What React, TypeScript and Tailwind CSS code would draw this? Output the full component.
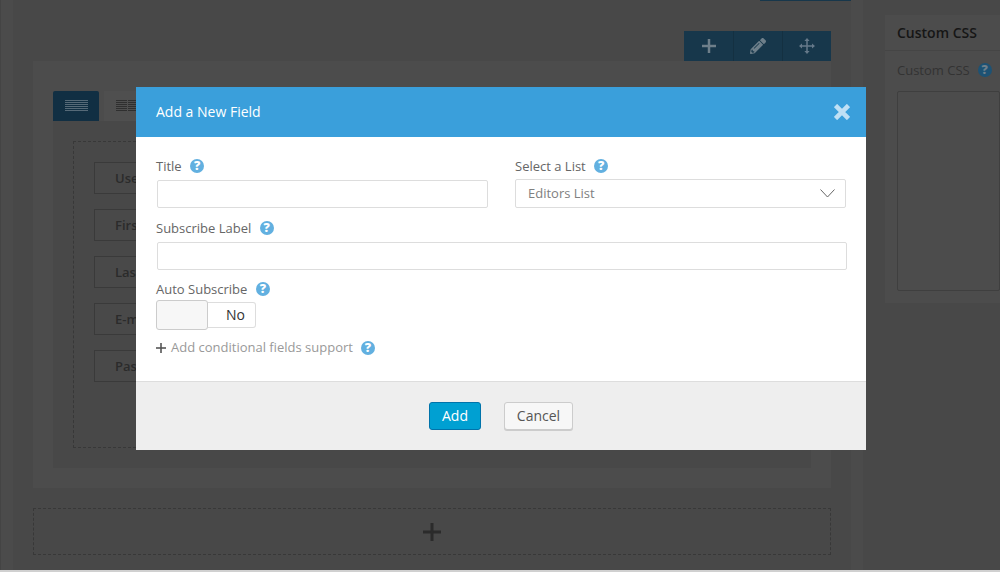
import { FaPencilAlt } from 'react-icons/fa';

const HelpIcon = ({ dim = false }: { dim?: boolean }) => (
  <span
    className={
      dim
        ? 'w-[14px] h-[14px] shrink-0 rounded-full bg-[#1d5274] text-[#6f7f8a] flex items-center justify-center text-[12.5px] leading-[14px] font-extrabold'
        : 'w-[14px] h-[14px] shrink-0 rounded-full bg-[#62b0e0] text-white flex items-center justify-center text-[12.5px] leading-[14px] font-extrabold'
    }
  >
    ?
  </span>
);

const PlusIcon = ({ size, weight, color }: { size: number; weight: number; color: string }) => (
  <svg width={size} height={size} viewBox={`0 0 ${size} ${size}`} stroke={color} strokeWidth={weight}>
    <line x1="0" x2={size} y1={size / 2} y2={size / 2} />
    <line x1={size / 2} x2={size / 2} y1="0" y2={size} />
  </svg>
);

const MoveIcon = () => (
  <svg width="16" height="16" viewBox="0 0 16 16" fill="#66798a">
    <path d="M7.25 3h1.5v4.25H13v1.5H8.75V13h-1.5V8.75H3v-1.5h4.25z" />
    <path d="M8 0l2.6 3H5.4zM8 16l-2.6-3h5.2zM0 8l3-2.6v5.2zM16 8l-3 2.6V5.4z" />
  </svg>
);

const RowsIcon = ({ color, columns }: { color: string; columns: number }) => (
  <svg width="23" height="12" viewBox="0 0 23 12" fill="none">
    {[0.5, 2.5, 4.5, 6.5, 8.5, 10.5].map((y) => (
      <g key={y} stroke={color} strokeWidth="1">
        {columns === 1 ? (
          <line x1="0" x2="23" y1={y} y2={y} />
        ) : (
          <>
            <line x1="0" x2="11" y1={y} y2={y} />
            <line x1="12" x2="23" y1={y} y2={y} />
          </>
        )}
      </g>
    ))}
  </svg>
);

// only the part of each name that shows beside the modal
const fieldNames = ['Use', 'Firs', 'Las', 'E-m', 'Pas'];

const Backdrop = () => (
  <div className="flex flex-1 min-h-0">
    <div className="w-[13px] bg-[#4b4b4b] border-l border-[#444]" />
    {/* Builder column */}
    <div className="w-[838px] px-5 flex flex-col">
      <div className="h-[1px] w-[91px] ml-[727px] bg-[#17374b] -mr-[20px] shrink-0" />
      <div className="flex justify-end h-[30px] mt-[30px] shrink-0">
        <div className="flex w-[147px] bg-[#17374b] text-[#6e7f8a]">
          <div className="w-[50px] flex items-center justify-center border-r border-[#143041]">
            <PlusIcon size={14} weight={2.5} color="#6e7f8a" />
          </div>
          <div className="w-[49px] flex items-center justify-center border-r border-[#143041]">
            <FaPencilAlt size={16} />
          </div>
          <div className="flex-1 flex items-center justify-center">
            <MoveIcon />
          </div>
        </div>
      </div>
      <div className="h-[427px] bg-[#4c4c4c] p-5 pt-[30px] shrink-0">
        <div className="flex gap-[5px] h-[30px]">
          <div className="w-[46px] rounded-t-[2px] bg-[#112f43] flex items-center justify-center">
            <RowsIcon color="#566a78" columns={1} />
          </div>
          <div className="w-[46px] bg-[#4f4f4f] flex items-center justify-center">
            <RowsIcon color="#2f2f2f" columns={2} />
          </div>
        </div>
        <div className="h-[347px] bg-[#484848] p-5 pb-0">
          <div className="h-[307px] border border-dashed border-[#383838] pl-5 pt-[20px] flex flex-col gap-[15px]">
            {fieldNames.map((name) => (
              <div
                key={name}
                className="h-[32px] w-[300px] border border-[#3a3a3a] bg-[#494949] pl-5 flex items-center text-[13px] leading-[20px] font-semibold text-[#2b2b2b]"
              >
                {name}
              </div>
            ))}
          </div>
        </div>
      </div>
      <div className="h-[47px] mt-5 border border-dashed border-[#383838] flex items-center justify-center shrink-0">
        <PlusIcon size={18} weight={3} color="#2b2b2b" />
      </div>
    </div>
    <div className="w-[12px] bg-[#4b4b4b]" />
    {/* Settings column */}
    <div className="flex-1 pl-[22px] pt-[15px]">
      <div className="h-[288px] bg-[#4c4c4c]">
        <div className="h-[36px] pl-3 flex items-center border-b border-[#454545] text-[14px] font-semibold text-[#161616]">
          Custom CSS
        </div>
        <div className="pl-3 pt-[10px] flex items-center gap-[8px] text-[13px] leading-[18px] text-[#333]">
          Custom CSS
          <HelpIcon dim />
        </div>
        <div className="ml-3 mt-[12px] h-[200px] border border-[#3f3f3f] rounded-[2px]" />
      </div>
    </div>
  </div>
);

const Label = ({ children }: { children: string }) => (
  <div className="flex items-center gap-[8.5px] h-[18px] text-[13px] text-[#666]">
    <span className="pt-[2px]">{children}</span>
    <HelpIcon />
  </div>
);

const AddFieldModal = () => (
  <div className="absolute left-[136px] top-[87px] w-[730px] h-[363px] flex flex-col bg-white rounded-[1px]">
    <div className="h-[50px] shrink-0 bg-[#3a9fdb] pl-5 pr-4 flex items-center justify-between">
      <span className="text-[14px] pb-[1px] text-white">Add a New Field</span>
      <svg width="16" height="16" viewBox="0 0 16 16" stroke="#bfe0f5" strokeWidth="4.6">
        <path d="M1.5 1.5L14.5 14.5M14.5 1.5L1.5 14.5" />
      </svg>
    </div>
    <div className="flex-1 px-5 pt-5">
      <div className="flex gap-[27px]">
        <div className="w-[332px]">
          <Label>Title</Label>
          <div className="ml-px mt-[5px] h-[28px] border border-[#ddd] rounded-[2px]" />
        </div>
        <div className="w-[331px]">
          <Label>Select a List</Label>
          <div className="mt-[4px] h-[29px] border border-[#ddd] rounded-[2px] pl-3 pr-[10px] flex items-center justify-between text-[13px] text-[#808080]">
            Editors List
            <svg width="15" height="9" viewBox="0 0 15 9" fill="none" stroke="#666" strokeWidth="1">
              <path d="M0.5 0.5L7.5 8L14.5 0.5" />
            </svg>
          </div>
        </div>
      </div>
      <div className="mt-[11px]">
        <Label>Subscribe Label</Label>
        <div className="ml-px -mr-px mt-[5px] h-[28px] border border-[#ddd] rounded-[2px]" />
      </div>
      <div className="mt-[10px]">
        <Label>Auto Subscribe</Label>
        <div className="mt-[2px] flex items-center">
          <div className="w-[52px] h-[30px] bg-[#f7f7f7] border border-[#ccc] rounded-[3px]" />
          <div className="w-[48px] h-[26px] pb-[2px] border border-l-0 border-[#ddd] rounded-r-[3px] pl-[18px] flex items-center text-[14px] text-[#333]">
            No
          </div>
        </div>
      </div>
      <div className="mt-[9px] flex items-center h-[18px] text-[13px] text-[#999]">
        <span className="mr-[5px]">
          <PlusIcon size={10} weight={1.6} color="#555" />
        </span>
        <span className="mr-[8px]">Add conditional fields support</span>
        <HelpIcon />
      </div>
    </div>
    <div className="h-[69px] shrink-0 bg-[#eee] border-t border-[#ddd] flex items-start justify-center pt-5 gap-[23px]">
      <button className="w-[52px] h-[28px] pb-[2px] bg-[#00a0d2] border border-[#0073aa] rounded-[3px] text-[14px] text-white">
        Add
      </button>
      <button className="w-[69px] h-[28px] pb-[2px] bg-[#f7f7f7] border border-[#ccc] shadow-[0_1px_0_#ccc] rounded-[3px] text-[14px] text-[#555]">
        Cancel
      </button>
    </div>
  </div>
);

export default function App() {
  return (
    <div className="relative w-[1000px] h-[572px] overflow-hidden flex flex-col bg-[#484848] font-['Open_Sans',sans-serif]">
      <Backdrop />
      <div className="h-[2px] shrink-0 bg-[#d0d0d0]" />
      <AddFieldModal />
    </div>
  );
}
